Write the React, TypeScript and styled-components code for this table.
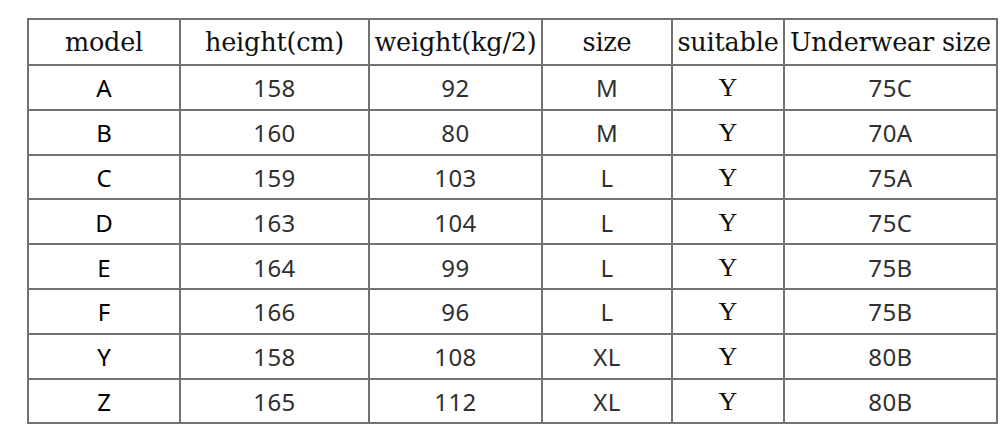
import React from 'react';
import styled, { createGlobalStyle } from 'styled-components';

const GlobalStyle = createGlobalStyle`
  html, body {
    margin: 0;
    padding: 0;
    background: #ffffff;
  }
`;

interface Row {
  model: string;
  height: number;
  weight: number;
  size: string;
  suitable: string;
  underwear: string;
}

const rows: Row[] = [
  { model: 'A', height: 158, weight: 92, size: 'M', suitable: 'Y', underwear: '75C' },
  { model: 'B', height: 160, weight: 80, size: 'M', suitable: 'Y', underwear: '70A' },
  { model: 'C', height: 159, weight: 103, size: 'L', suitable: 'Y', underwear: '75A' },
  { model: 'D', height: 163, weight: 104, size: 'L', suitable: 'Y', underwear: '75C' },
  { model: 'E', height: 164, weight: 99, size: 'L', suitable: 'Y', underwear: '75B' },
  { model: 'F', height: 166, weight: 96, size: 'L', suitable: 'Y', underwear: '75B' },
  { model: 'Y', height: 158, weight: 108, size: 'XL', suitable: 'Y', underwear: '80B' },
  { model: 'Z', height: 165, weight: 112, size: 'XL', suitable: 'Y', underwear: '80B' },
];

const columns = [152, 189, 173, 130, 112, 213];

const Page = styled.div`
  padding: 18px 0 0 27px;
`;

const Table = styled.table`
  border-collapse: collapse;
  table-layout: fixed;
  width: 970px;
`;

const HeadCell = styled.th`
  height: 44px;
  padding: 0;
  border: 2px solid #727272;
  font-family: 'DejaVu Serif', 'Liberation Serif', serif;
  font-size: 25.5px;
  font-weight: 400;
  color: #111111;
  text-align: center;
  white-space: nowrap;
  overflow: hidden;
  letter-spacing: -0.2px;
`;

const DataCell = styled.td<{ $kind?: 'model' | 'serif' }>`
  height: 40.8px;
  padding: 2px 0 0 0;
  border: 2px solid #727272;
  text-align: center;
  font-family: ${(p) =>
    p.$kind === 'serif' ? "'Liberation Serif', serif" : "'Noto Sans', sans-serif"};
  font-size: ${(p) => (p.$kind === 'serif' ? '26px' : '24px')};
  font-weight: 400;
  color: ${(p) => (p.$kind === 'model' ? '#000000' : p.$kind === 'serif' ? '#111111' : '#303030')};
  letter-spacing: ${(p) => (p.$kind ? '0' : '0.4px')};
  line-height: 1;
`;

export default function App() {
  return (
    <Page>
      <GlobalStyle />
      <Table>
        <colgroup>
          {columns.map((w, i) => (
            <col key={i} style={{ width: w }} />
          ))}
        </colgroup>
        <thead>
          <tr>
            <HeadCell>model</HeadCell>
            <HeadCell>height(cm)</HeadCell>
            <HeadCell>weight(kg/2)</HeadCell>
            <HeadCell>size</HeadCell>
            <HeadCell>suitable</HeadCell>
            <HeadCell>Underwear size</HeadCell>
          </tr>
        </thead>
        <tbody>
          {rows.map((r) => (
            <tr key={r.model}>
              <DataCell $kind="model">{r.model}</DataCell>
              <DataCell>{r.height}</DataCell>
              <DataCell>{r.weight}</DataCell>
              <DataCell>{r.size}</DataCell>
              <DataCell $kind="serif">{r.suitable}</DataCell>
              <DataCell>{r.underwear}</DataCell>
            </tr>
          ))}
        </tbody>
      </Table>
    </Page>
  );
}
